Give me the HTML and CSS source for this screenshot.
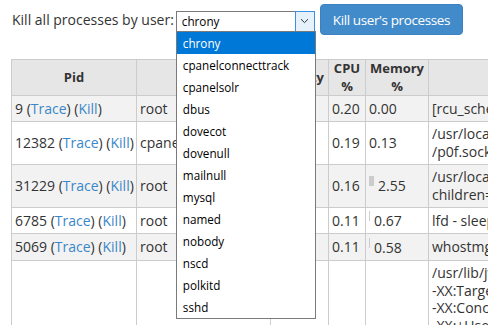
FILE: index.html
```
<!DOCTYPE html>
<html>
<head>
<meta charset="utf-8">
<link rel="stylesheet" href="styles.css">
</head>
<body>
<div class="page">
  <div class="killbar">
    <span class="killlabel">Kill all processes by user:</span>
    <div class="selectwrap">
      <div class="select">
        <span class="select-value">chrony</span>
        <span class="select-arrow"><svg width="9" height="6" viewBox="0 0 9 6"><path d="M1 1.2 L4.5 4.6 L8 1.2" fill="none" stroke="#333" stroke-width="1"/></svg></span>
      </div>
      <ul class="dropdown">
        <li class="opt opt-active">chrony</li>
        <li class="opt">cpanelconnecttrack</li>
        <li class="opt">cpanelsolr</li>
        <li class="opt">dbus</li>
        <li class="opt">dovecot</li>
        <li class="opt">dovenull</li>
        <li class="opt">mailnull</li>
        <li class="opt">mysql</li>
        <li class="opt">named</li>
        <li class="opt">nobody</li>
        <li class="opt">nscd</li>
        <li class="opt">polkitd</li>
        <li class="opt">sshd</li>
      </ul>
    </div>
    <button class="btn">Kill user's processes</button>
  </div>

  <table class="proc">
    <colgroup>
      <col class="c-pid">
      <col class="c-owner">
      <col class="c-prio">
      <col class="c-cpu">
      <col class="c-mem">
      <col class="c-cmd">
    </colgroup>
    <thead>
      <tr>
        <th>Pid</th>
        <th>Owner</th>
        <th>Priority</th>
        <th>CPU<br>%</th>
        <th>Memory<br>%</th>
        <th>Command</th>
      </tr>
    </thead>
    <tbody>
      <tr class="odd">
        <td>9 (<a href="#">Trace</a>) (<a href="#">Kill</a>)</td>
        <td>root</td>
        <td>0</td>
        <td>0.20</td>
        <td>0.00</td>
        <td class="cmd">[rcu_sched]</td>
      </tr>
      <tr>
        <td>12382 (<a href="#">Trace</a>) (<a href="#">Kill</a>)</td>
        <td>cpanelconnecttrack</td>
        <td>0</td>
        <td>0.19</td>
        <td>0.13</td>
        <td class="cmd">/usr/local/cpanel/3rdparty/bin/p0f -i any -u nobody -d -s<br>/p0f.sock</td>
      </tr>
      <tr class="odd">
        <td>31229 (<a href="#">Trace</a>) (<a href="#">Kill</a>)</td>
        <td>root</td>
        <td>0</td>
        <td>0.16</td>
        <td><span class="membar" style="width:5px"></span>2.55</td>
        <td class="cmd">/usr/local/cpanel/3rdparty/perl/bin/cpsrvd --max-<br>children=5</td>
      </tr>
      <tr>
        <td>6785 (<a href="#">Trace</a>) (<a href="#">Kill</a>)</td>
        <td>root</td>
        <td>0</td>
        <td>0.11</td>
        <td><span class="membar" style="width:1px"></span>0.67</td>
        <td class="cmd">lfd - sleeping</td>
      </tr>
      <tr class="odd">
        <td>5069 (<a href="#">Trace</a>) (<a href="#">Kill</a>)</td>
        <td>root</td>
        <td>0</td>
        <td>0.11</td>
        <td><span class="membar" style="width:1px"></span>0.58</td>
        <td class="cmd">whostmgrd - accepting connections on 2086 &amp; 2087</td>
      </tr>
      <tr>
        <td>3141 (<a href="#">Trace</a>) (<a href="#">Kill</a>)</td>
        <td>cpanelsolr</td>
        <td>0</td>
        <td>0.10</td>
        <td><span class="membar" style="width:9px"></span>4.21</td>
        <td class="cmd">/usr/lib/jvm/jre/bin/java -server -Xms512m -Xmx512m<br>-XX:TargetSurvivorRatio=90<br>-XX:ConcGCThreads=4<br>-XX:+UseConcMarkSweepGC<br>-XX:+UseParNewGC<br>-XX:MaxTenuringThreshold=8<br>-XX:+CMSParallelRemarkEnabled<br>-Dsolr.log.dir=/home/cpanelsolr/logs</td>
      </tr>
    </tbody>
  </table>
</div>
</body>
</html>
```
FILE: styles.css
```
html {
  overflow: hidden;
}
body {
  margin: 0;
  font-family: "Open Sans", "DejaVu Sans", sans-serif;
  font-size: 14px;
  color: #333;
}
.page {
  padding: 4px 11px;
}
.killbar {
  display: flex;
  align-items: center;
  height: 31px;
}
.killlabel {
  margin-left: 1px;
  margin-right: 2px;
  line-height: 20px;
}
.selectwrap {
  position: relative;
  margin-top: 3px;
}
.select {
  display: flex;
  align-items: stretch;
  width: 139px;
  height: 21px;
  box-sizing: border-box;
  border: 1px solid #7a7a7a;
  background: #fff;
}
.select-value {
  flex: 1;
  font-size: 11.7px;
  line-height: 19px;
  padding-left: 5px;
  color: #000;
}
.select-arrow {
  display: flex;
  align-items: center;
  justify-content: center;
  width: 18px;
  margin: -1px -1px -1px 0;
  border: 1px solid #3d8ee0;
  background: #e5f1fb;
}
.dropdown {
  position: absolute;
  left: 0;
  top: 20px;
  width: 140px;
  margin: 0;
  padding: 0;
  list-style: none;
  box-sizing: border-box;
  border: 1px solid #7a7a7a;
  background: #fff;
  z-index: 5;
}
.opt {
  height: 22px;
  line-height: 22px;
  font-size: 11.7px;
  padding-left: 6px;
  color: #000;
}
.opt-active {
  background: #0078d7;
  color: #fff;
}
.btn {
  margin-left: 5px;
  height: 31px;
  padding: 0 12px;
  border: 1px solid #3d80c0;
  border-radius: 4px;
  background: #428bca;
  color: #fff;
  font-family: "Open Sans", "DejaVu Sans", sans-serif;
  font-size: 13.5px;
  letter-spacing: -0.4px;
}
.proc {
  margin-top: 24px;
  border-collapse: collapse;
  table-layout: fixed;
  width: 817px;
}
.c-pid { width: 125px; }
.c-owner { width: 134px; }
.c-prio { width: 58px; }
.c-cpu { width: 37px; }
.c-mem { width: 63px; }
.c-cmd { width: 400px; }
.proc th {
  background: #e6e6e6;
  border: 1px solid #cccccc;
  font-size: 13px;
  font-weight: bold;
  line-height: 17.5px;
  padding: 0 3px;
  text-align: center;
  vertical-align: middle;
}
.proc td {
  border: 1px solid #cccccc;
  line-height: 17.5px;
  padding: 3.5px 3px;
  vertical-align: middle;
  white-space: nowrap;
  overflow: hidden;
}
.proc tr.odd td {
  background: #f2f2f2;
}
.proc a {
  color: #3a87c8;
  text-decoration: none;
}
.membar {
  display: inline-block;
  height: 10px;
  background: #cccccc;
  margin-right: 4px;
  vertical-align: 5px;
}
```
